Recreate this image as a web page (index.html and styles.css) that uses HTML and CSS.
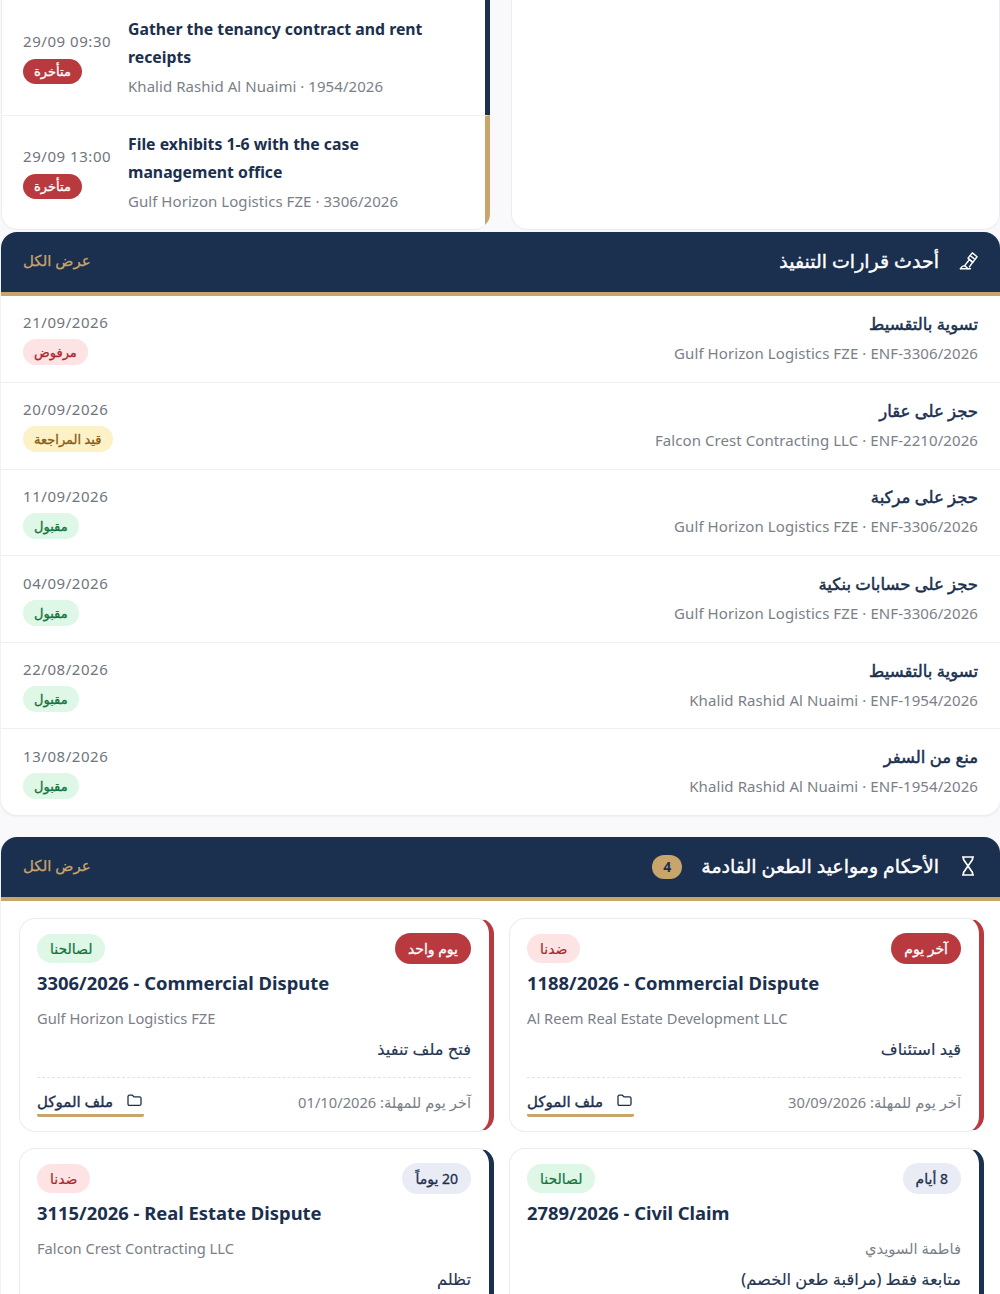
FILE: index.html
```html
<!DOCTYPE html>
<html lang="ar" dir="rtl">
<head>
<meta charset="utf-8">
<title>لوحة المتابعة</title>
<link rel="stylesheet" href="styles.css">
</head>
<body>
<main class="page">
  <div class="top-grid">
    <section class="card blank"></section>
    <section class="card tasks">
      <div class="task navy">
        <div class="task-text">
          <div class="task-title" dir="auto">Gather the tenancy contract and rent receipts</div>
          <div class="task-sub" dir="auto">Khalid Rashid Al Nuaimi · 1954/2026</div>
        </div>
        <div class="task-when">
          <span class="date" dir="ltr">29/09 09:30</span>
          <span class="late">متأخرة</span>
        </div>
      </div>
      <div class="task gold">
        <div class="task-text">
          <div class="task-title" dir="auto">File exhibits 1-6 with the case management office</div>
          <div class="task-sub" dir="auto">Gulf Horizon Logistics FZE · 3306/2026</div>
        </div>
        <div class="task-when">
          <span class="date" dir="ltr">29/09 13:00</span>
          <span class="late">متأخرة</span>
        </div>
      </div>
    </section>
  </div>

  <section class="panel">
    <header class="panel-head">
      <svg class="icon-hammer" viewBox="0 0 20 20" fill="none" stroke="currentColor" stroke-width="1.5" stroke-linejoin="round" stroke-linecap="round"><path d="M1.500 18.600h10.500"/><path d="M1.500 18.600c1-2 2.500-3 4.500-3.200l3.500 3.200"/><path d="M6 15.400l5-6.400 3.500 2.800-3.500 5"/><path d="M9.500 7.500l4.500-5.500 5 4-4.500 6z"/><path d="M12 5l3.800 3"/></svg>
      <h2>أحدث قرارات التنفيذ</h2>
      <a class="view-all">عرض الكل</a>
    </header>
    <div class="row">
      <div><div class="row-title">تسوية بالتقسيط</div><div class="row-sub" dir="rtl">Gulf Horizon Logistics FZE · ENF-3306/2026</div></div>
      <div class="row-end"><span class="date wide" dir="ltr">21/09/2026</span><span class="pill red">مرفوض</span></div>
    </div>
    <div class="row">
      <div><div class="row-title">حجز على عقار</div><div class="row-sub" dir="rtl">Falcon Crest Contracting LLC · ENF-2210/2026</div></div>
      <div class="row-end"><span class="date wide" dir="ltr">20/09/2026</span><span class="pill amber">قيد المراجعة</span></div>
    </div>
    <div class="row">
      <div><div class="row-title">حجز على مركبة</div><div class="row-sub" dir="rtl">Gulf Horizon Logistics FZE · ENF-3306/2026</div></div>
      <div class="row-end"><span class="date wide" dir="ltr">11/09/2026</span><span class="pill green">مقبول</span></div>
    </div>
    <div class="row">
      <div><div class="row-title">حجز على حسابات بنكية</div><div class="row-sub" dir="rtl">Gulf Horizon Logistics FZE · ENF-3306/2026</div></div>
      <div class="row-end"><span class="date wide" dir="ltr">04/09/2026</span><span class="pill green">مقبول</span></div>
    </div>
    <div class="row">
      <div><div class="row-title">تسوية بالتقسيط</div><div class="row-sub" dir="rtl">Khalid Rashid Al Nuaimi · ENF-1954/2026</div></div>
      <div class="row-end"><span class="date wide" dir="ltr">22/08/2026</span><span class="pill green">مقبول</span></div>
    </div>
    <div class="row">
      <div><div class="row-title">منع من السفر</div><div class="row-sub" dir="rtl">Khalid Rashid Al Nuaimi · ENF-1954/2026</div></div>
      <div class="row-end"><span class="date wide" dir="ltr">13/08/2026</span><span class="pill green">مقبول</span></div>
    </div>
  </section>

  <section class="panel appeals">
    <header class="panel-head">
      <svg class="icon-hourglass" viewBox="0 0 14 20" fill="none" stroke="currentColor" stroke-width="1.700" stroke-linejoin="round"><path d="M1 1h12M1 19h12"/><path d="M2.500 1v2.500L11.500 16.500V19M11.500 1v2.500L2.500 16.500V19"/></svg>
      <h2>الأحكام ومواعيد الطعن القادمة</h2>
      <span class="count">4</span>
      <a class="view-all">عرض الكل</a>
    </header>
    <div class="appeal-grid">
      <article class="appeal urgent">
        <div class="appeal-top"><span class="due due-red">آخر يوم</span><span class="side side-against">ضدنا</span></div>
        <div class="appeal-title" dir="auto">1188/2026 - Commercial Dispute</div>
        <div class="appeal-client" dir="auto">Al Reem Real Estate Development LLC</div>
        <div class="appeal-type">قيد استئناف</div>
        <div class="appeal-foot">
          <span class="deadline">آخر يوم للمهلة: 30/09/2026</span>
          <a class="file-link"><svg class="icon-folder" viewBox="0 0 16 14" fill="none" stroke="currentColor" stroke-width="1.400" stroke-linejoin="round"><path d="M1 3c0-1 .6-1.700 1.600-1.700h3.200l1.600 1.800h6c1 0 1.600.6 1.600 1.600v6c0 1-.6 1.600-1.600 1.600H2.600c-1 0-1.600-.6-1.600-1.600z"/></svg>ملف الموكل</a>
        </div>
      </article>
      <article class="appeal urgent">
        <div class="appeal-top"><span class="due due-red">يوم واحد</span><span class="side side-for">لصالحنا</span></div>
        <div class="appeal-title" dir="auto">3306/2026 - Commercial Dispute</div>
        <div class="appeal-client" dir="auto">Gulf Horizon Logistics FZE</div>
        <div class="appeal-type">فتح ملف تنفيذ</div>
        <div class="appeal-foot">
          <span class="deadline">آخر يوم للمهلة: 01/10/2026</span>
          <a class="file-link"><svg class="icon-folder" viewBox="0 0 16 14" fill="none" stroke="currentColor" stroke-width="1.400" stroke-linejoin="round"><path d="M1 3c0-1 .6-1.700 1.600-1.700h3.200l1.600 1.800h6c1 0 1.600.6 1.600 1.600v6c0 1-.6 1.600-1.600 1.600H2.600c-1 0-1.600-.6-1.600-1.600z"/></svg>ملف الموكل</a>
        </div>
      </article>
      <article class="appeal calm">
        <div class="appeal-top"><span class="due due-soft">8 أيام</span><span class="side side-for">لصالحنا</span></div>
        <div class="appeal-title" dir="auto">2789/2026 - Civil Claim</div>
        <div class="appeal-client" dir="auto">فاطمة السويدي</div>
        <div class="appeal-type">متابعة فقط (مراقبة طعن الخصم)</div>
      </article>
      <article class="appeal calm">
        <div class="appeal-top"><span class="due due-soft">20 يوماً</span><span class="side side-against">ضدنا</span></div>
        <div class="appeal-title" dir="auto">3115/2026 - Real Estate Dispute</div>
        <div class="appeal-client" dir="auto">Falcon Crest Contracting LLC</div>
        <div class="appeal-type">تظلم</div>
      </article>
    </div>
  </section>
</main>
</body>
</html>
```

FILE: styles.css
```css
* { box-sizing: border-box; }
html, body { margin: 0; padding: 0; height: 1294px; overflow: hidden; }
body {
  background: #f9f9fb;
  color: #1b2f4e;
  font-family: "Noto Sans", "DejaVu Sans", sans-serif;
  font-size: 15px;
}
h2 { margin: 0; }
.page { padding-left: 1px; width: 1000px; }

.top-grid { display: grid; grid-template-columns: 489px 489px; column-gap: 21px; height: 230px; }
.card { background: #fff; border: 1px solid #ececf0; border-top: 0; border-radius: 0 0 16px 16px; }
.tasks { overflow: hidden; border-right: 0; }
.task { display: flex; align-items: center; gap: 17px; padding: 0 21px 3px; height: 115px; }
.task + .task { border-top: 1px solid #f0f0f3; height: 114px; }
.task.navy { border-right: 5px solid #1b2f4e; }
.task.gold { border-right: 5px solid #c9a56c; }
.task-text { flex: 1; min-width: 0; }
.task-title { font-size: 15.800px; font-weight: 700; line-height: 28px; color: #1b2f4e; }
.task-sub { font-size: 15px; line-height: 24px; margin-top: 3px; color: #7b8088; letter-spacing: .05px; }
.task-when { display: flex; flex-direction: column; align-items: flex-end; gap: 6px; width: 88px; flex: none; }
.date { font-size: 15px; line-height: 24px; color: #70757d; white-space: nowrap; letter-spacing: .55px; }
.late { background: #b83a3e; color: #fff; font-size: 13px; -webkit-text-stroke: .3px #fff; height: 25px; line-height: 25px; padding: 0 11px; border-radius: 13px; }

.panel { background: #fff; box-shadow: 0 1px 3px rgba(27, 47, 78, .1); border-radius: 16px; margin-top: 2px; overflow: hidden; }
.panel-head { display: flex; align-items: center; background: #1b2f4e; border-bottom: 4px solid #c9a56c; height: 63.500px; padding: 0 22px; color: #fff; }
.panel-head h2 { font-size: 19px; font-weight: 400; -webkit-text-stroke: .4px #fff; margin-top: -2px; }
.icon-hammer { width: 19px; height: 19px; margin: -2px 0 0 20px; }
.icon-hourglass { width: 14px; height: 20px; margin: -1px 3px 0 22px; }
.view-all { margin-right: auto; margin-top: -3px; color: #c9a56c; font-size: 15px; -webkit-text-stroke: .25px #c9a56c; }
.count { background: #c9a56c; color: #1b2f4e; font-size: 14px; font-weight: 700; width: 30px; height: 24px; line-height: 24px; border-radius: 12px; text-align: center; margin-right: 19px; }

.row { display: flex; justify-content: space-between; align-items: center; height: 86.600px; padding: 0 22px 2px; }
.row + .row { border-top: 1px solid #f0f0f3; }
.row-title { font-size: 16.500px; -webkit-text-stroke: .5px #1b2f4e; line-height: 28px; margin-top: -1px; }
.row-sub { font-size: 15px; line-height: 24px; color: #7b8088; margin-top: 3px; letter-spacing: .08px; }
.row-end { display: flex; flex-direction: column; align-items: flex-end; gap: 5px; margin-top: 2px; }
.date.wide { margin-top: -2px; }
.pill { height: 26px; line-height: 26px; padding: 0 11px; border-radius: 13px; font-size: 13px; -webkit-text-stroke: .3px currentColor; }
.pill.red { background: #fde3e3; color: #a82a2e; }
.pill.amber { background: #fdf1c7; color: #8a5a10; }
.pill.green { background: #def7e6; color: #12733f; }

.appeals { margin-top: 22px; }
.appeal-grid { display: grid; grid-template-columns: 475px 475px; column-gap: 15px; row-gap: 16px; padding: 17.500px 16px 0 18px; }
.appeal { background: #fff; border: 1px solid #ececf0; border-radius: 16px; padding: 14px 18px 0 17px; height: 214px; }
.appeal.urgent { border-right: 5px solid #b83a3e; }
.appeal.calm { border-right: 5px solid #1b2f4e; }
.appeal-top { display: flex; justify-content: space-between; align-items: center; height: 31px; }
.due { height: 31px; line-height: 31px; padding: 0 13px; border-radius: 16px; font-size: 14px; -webkit-text-stroke: .3px currentColor; }
.due-red { background: #b83a3e; color: #fff; }
.due-soft { background: #e9ecf5; color: #1b2f4e; }
.side { height: 29px; line-height: 29px; padding: 0 13px; border-radius: 15px; font-size: 14px; -webkit-text-stroke: .2px currentColor; }
.side-for { background: #def7e6; color: #12733f; }
.side-against { background: #fde3e3; color: #a82a2e; }
.appeal-title { font-size: 18.400px; font-weight: 700; line-height: 28px; margin-top: 5px; }
.appeal-client { font-size: 14.700px; line-height: 24px; color: #7b8088; margin-top: 9px; }
.appeal-type { font-size: 16.300px; -webkit-text-stroke: .15px #24344f; line-height: 28px; margin-top: 5px; color: #24344f; }
.appeal-foot { display: flex; justify-content: space-between; align-items: flex-start; border-top: 1px dashed #e3e3e7; margin-top: 14px; padding-top: 9px; }
.deadline { font-size: 14.700px; color: #7b8088; margin-top: 5px; }
.file-link { display: flex; align-items: center; gap: 14px; font-size: 15px; -webkit-text-stroke: .4px #1b2f4e; height: 30px; padding: 0 2px 0 0; border-bottom: 3px solid #c9a56c; border-radius: 2px; }
.icon-folder { width: 15px; height: 13px; }
```
